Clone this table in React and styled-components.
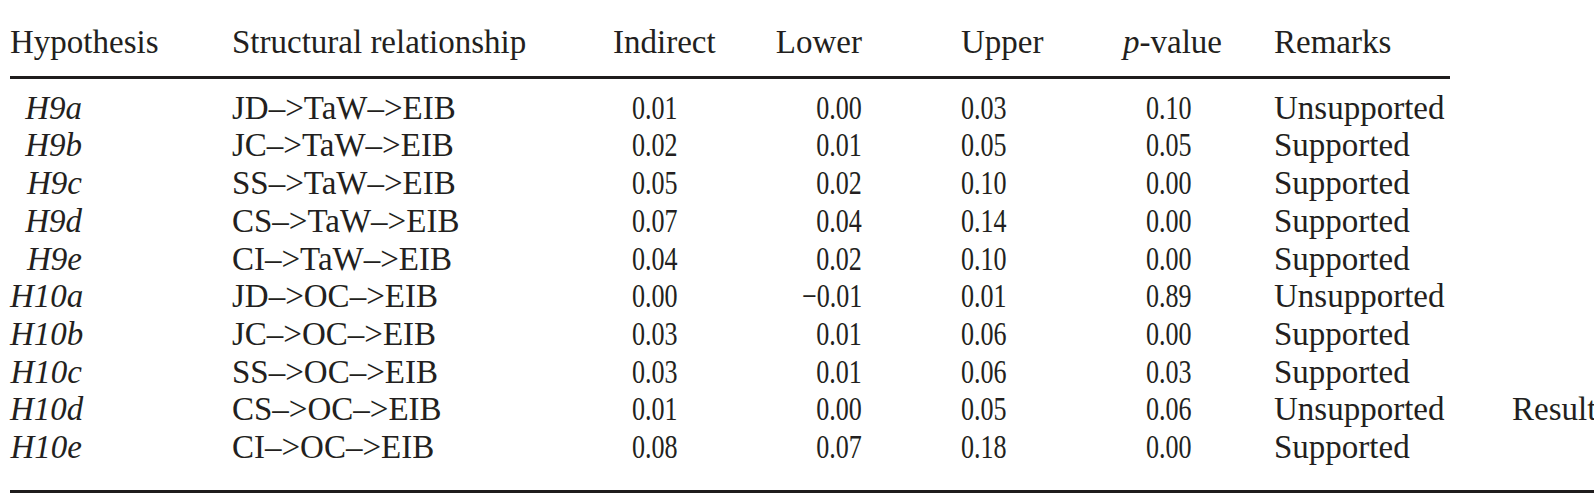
import React from 'react';
import styled, { createGlobalStyle } from 'styled-components';

const columns = [
  { key: 'hyp', width: 222, head: 'Hypothesis', headPad: 0, cellAlign: 'right', cellPad: 150 },
  { key: 'rel', width: 368, head: 'Structural relationship', headPad: 0, cellPad: 0 },
  { key: 'ind', width: 160, head: 'Indirect', headPad: 13, cellPad: 32, num: true },
  { key: 'low', width: 170, head: 'Lower', headAlign: 'right', headPad: 68, cellAlign: 'right', cellPad: 68, num: true },
  { key: 'up', width: 170, head: 'Upper', headPad: 31, cellPad: 31, num: true },
  { key: 'p', width: 160, head: 'p-value', headPad: 23, cellPad: 46, num: true },
  { key: 'rem', width: 190, head: 'Remarks', headPad: 14, cellPad: 14 },
];

const rows = [
  ['H9a', 'JD–>TaW–>EIB', '0.01', '0.00', '0.03', '0.10', 'Unsupported'],
  ['H9b', 'JC–>TaW–>EIB', '0.02', '0.01', '0.05', '0.05', 'Supported'],
  ['H9c', 'SS–>TaW–>EIB', '0.05', '0.02', '0.10', '0.00', 'Supported'],
  ['H9d', 'CS–>TaW–>EIB', '0.07', '0.04', '0.14', '0.00', 'Supported'],
  ['H9e', 'CI–>TaW–>EIB', '0.04', '0.02', '0.10', '0.00', 'Supported'],
  ['H10a', 'JD–>OC–>EIB', '0.00', '−0.01', '0.01', '0.89', 'Unsupported'],
  ['H10b', 'JC–>OC–>EIB', '0.03', '0.01', '0.06', '0.00', 'Supported'],
  ['H10c', 'SS–>OC–>EIB', '0.03', '0.01', '0.06', '0.03', 'Supported'],
  ['H10d', 'CS–>OC–>EIB', '0.01', '0.00', '0.05', '0.06', 'Unsupported', 'Results'],
  ['H10e', 'CI–>OC–>EIB', '0.08', '0.07', '0.18', '0.00', 'Supported'],
];

const GlobalStyle = createGlobalStyle`
  html, body {
    margin: 0;
    padding: 0;
    background: #fff;
    overflow: hidden;
  }
  body {
    font-family: "Liberation Serif", "Times New Roman", serif;
    color: #231f20;
  }
`;

const Table = styled.div`
  display: grid;
  grid-template-columns: ${columns.map((c) => `${c.width}px`).join(' ')} 1fr;
  padding-left: 10px;
  width: 1594px;
  box-sizing: border-box;
  font-size: 33px;
  line-height: 37.7px;
  white-space: nowrap;
`;

const HeadCell = styled.div`
  padding: 24px 0 14px;
  border-bottom: 3px solid #1f1c1d;
  text-align: ${(p) => p.$align || 'left'};
  padding-left: ${(p) => (p.$align === 'right' ? 0 : p.$pad)}px;
  padding-right: ${(p) => (p.$align === 'right' ? p.$pad : 0)}px;
`;

const HeadSpacer = styled.div``;

const Cell = styled.div`
  text-align: ${(p) => p.$align || 'left'};
  padding-left: ${(p) => (p.$align === 'right' ? 0 : p.$pad)}px;
  padding-right: ${(p) => (p.$align === 'right' ? p.$pad : 0)}px;
  padding-top: ${(p) => (p.$first ? 11 : 0)}px;
  font-style: ${(p) => (p.$italic ? 'italic' : 'normal')};
`;

/* the source typeface has narrow, tall figures */
const Num = styled.span`
  display: inline-block;
  transform: scaleX(0.79);
  transform-origin: ${(p) => (p.$align === 'right' ? 'right' : 'left')} center;
`;

const SideNote = styled.div`
  padding-left: 62px;
  padding-top: ${(p) => (p.$first ? 11 : 0)}px;
`;

const BottomRule = styled.div`
  grid-column: 1 / -1;
  margin-top: 23px;
  border-top: 3px solid #1f1c1d;
  margin-right: -10px;
`;

const Italic = styled.i``;

export default function App() {
  return (
    <>
      <GlobalStyle />
      <Table>
        {columns.map((c) => (
          <HeadCell key={c.key} $align={c.headAlign} $pad={c.headPad}>
            {c.key === 'p' ? (
              <>
                <Italic>p</Italic>-value
              </>
            ) : (
              c.head
            )}
          </HeadCell>
        ))}
        <HeadSpacer />
        {rows.map((r, i) => (
          <React.Fragment key={r[0]}>
            {columns.map((c, j) => (
              <Cell
                key={c.key}
                $align={c.cellAlign}
                $pad={c.cellPad}
                $italic={j === 0}
                $first={i === 0}
              >
                {c.num ? <Num $align={c.cellAlign}>{r[j]}</Num> : r[j]}
              </Cell>
            ))}
            <SideNote $first={i === 0}>{r[7] || ''}</SideNote>
          </React.Fragment>
        ))}
        <BottomRule />
      </Table>
    </>
  );
}
